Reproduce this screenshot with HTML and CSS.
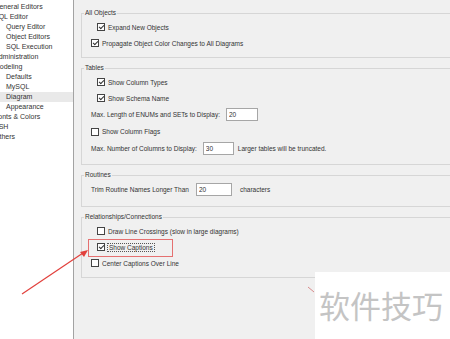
FILE: index.html
```html
<!DOCTYPE html>
<html lang="en">
<head>
    <meta charset="UTF-8">
    <meta name="viewport" content="width=device-width, initial-scale=1.0">
    <title>Preferences - Diagram</title>
    <link rel="stylesheet" href="styles.css">
</head>
<body>

<div class="janela">
    <!-- Arvore de categorias -->
    <ul class="arvore">
        <li class="nivel1">General Editors</li>
        <li class="nivel1">SQL Editor</li>
        <li class="nivel2">Query Editor</li>
        <li class="nivel2">Object Editors</li>
        <li class="nivel2">SQL Execution</li>
        <li class="nivel1">Administration</li>
        <li class="nivel1">Modeling</li>
        <li class="nivel2">Defaults</li>
        <li class="nivel2">MySQL</li>
        <li class="nivel2 selecionado">Diagram</li>
        <li class="nivel2">Appearance</li>
        <li class="nivel1">Fonts &amp; Colors</li>
        <li class="nivel1">SSH</li>
        <li class="nivel1">Others</li>
    </ul>

    <div class="pagina">
        <fieldset class="grupo">
            <legend>All Objects</legend>
            <div class="linha recuo"><span class="caixa marcada"></span>Expand New Objects</div>
            <div class="linha"><span class="caixa marcada"></span>Propagate Object Color Changes to All Diagrams</div>
        </fieldset>

        <fieldset class="grupo tabelas">
            <legend>Tables</legend>
            <div class="linha recuo"><span class="caixa marcada"></span>Show Column Types</div>
            <div class="linha recuo"><span class="caixa marcada"></span>Show Schema Name</div>
            <div class="linha alta">Max. Length of ENUMs and SETs to Display: <input class="campo largo" type="text" value="20"></div>
            <div class="linha alta"><span class="caixa"></span>Show Column Flags</div>
            <div class="linha alta">Max. Number of Columns to Display: <input class="campo" type="text" value="30"><span class="nota">Larger tables will be truncated.</span></div>
        </fieldset>

        <fieldset class="grupo rotinas">
            <legend>Routines</legend>
            <div class="linha alta">Trim Routine Names Longer Than <input class="campo medio" type="text" value="20"><span class="nota longe">characters</span></div>
        </fieldset>

        <fieldset class="grupo">
            <legend>Relationships/Connections</legend>
            <div class="linha recuo"><span class="caixa"></span>Draw Line Crossings (slow in large diagrams)</div>
            <div class="linha recuo"><span class="caixa marcada"></span><span class="foco">Show Captions</span></div>
            <div class="linha"><span class="caixa"></span>Center Captions Over Line</div>
        </fieldset>
    </div>
</div>

<!-- Marcacao vermelha por cima da tela -->
<div class="destaque"></div>
<svg class="seta" width="450" height="339" viewBox="0 0 450 339">
    <line x1="22" y1="294" x2="83" y2="253" stroke="#e2403c" stroke-width="1.2"/>
    <polygon points="88,250 80,252 84,257" fill="#e2403c"/>
    <line x1="308" y1="287" x2="314" y2="292" stroke="#d88a8a" stroke-width="1"/>
</svg>

<div class="marca-dagua">软件技巧</div>

</body>
</html>
```

FILE: styles.css
```css
/* Janela de preferencias */
body {
    margin: 0;
    width: 450px;
    height: 339px;
    overflow: hidden;
    position: relative;
    font-family: "Liberation Sans", Arial, sans-serif;
    color: #333;
}
.janela {
    display: flex;
    height: 339px;
}
/* Arvore da esquerda */
.arvore {
    list-style: none;
    margin: 0;
    padding: 2px 0 0 0;
    width: 73px;
    flex-shrink: 0;
    background-color: white;
    border-right: 1px solid #a3a3a3;
    overflow: hidden;
    font-size: 7px;
}
.arvore li {
    height: 10px;
    line-height: 10px;
    white-space: nowrap;
}
.nivel1 {
    margin-left: -6px;
}
.nivel2 {
    padding-left: 6px;
}
.selecionado {
    background-color: #e9e9e9;
}
/* Area dos grupos */
.pagina {
    flex: 1;
    background-color: #f0f0f0;
    padding: 8px 0 0 7px;
    overflow: hidden;
    font-size: 6.5px;
}
.grupo {
    margin: 0 -20px 5px 0;
    border: 1px solid #d6d6d6;
    padding: 1px 0 6px 9px;
    min-width: 0;
}
.grupo legend {
    margin-left: -7px;
    padding: 0 1px;
    line-height: 10px;
}
.tabelas {
    padding-bottom: 7px;
}
.rotinas {
    padding-bottom: 8px;
}
.linha {
    display: flex;
    align-items: center;
    height: 16px;
    white-space: nowrap;
}
.linha.alta {
    height: 17px;
}
.recuo {
    padding-left: 6px;
}
/* Caixa de selecao desenhada */
.caixa {
    position: relative;
    width: 8px;
    height: 8px;
    box-sizing: border-box;
    border: 1px solid #444;
    background-color: white;
    margin-right: 3px;
    flex-shrink: 0;
}
.caixa.marcada::after {
    content: '';
    position: absolute;
    left: 2px;
    top: 0;
    width: 2px;
    height: 4px;
    border-right: 1px solid #333;
    border-bottom: 1px solid #333;
    transform: rotate(45deg);
}
.campo {
    font-family: inherit;
    font-size: 6.5px;
    color: #333;
    width: 31px;
    height: 13px;
    box-sizing: border-box;
    margin: 0 0 0 6px;
    padding: 0 2px;
    border: 1px solid #a6a6a6;
    background-color: white;
    outline: none;
}
.campo.largo {
    width: 32px;
}
.campo.medio {
    width: 36px;
    margin-left: 7px;
}
.nota {
    margin-left: 4px;
}
.nota.longe {
    margin-left: 8px;
}
.foco {
    outline: 1px dotted #555;
    padding: 0 1px;
}
/* Anotacoes em vermelho */
.destaque {
    position: absolute;
    left: 88px;
    top: 239px;
    width: 83px;
    height: 16px;
    border: 1px solid #e57070;
}
.seta {
    position: absolute;
    left: 0;
    top: 0;
    pointer-events: none;
}
.marca-dagua {
    position: absolute;
    left: 315px;
    top: 272px;
    width: 135px;
    height: 67px;
    background-color: white;
    color: #c4c4c4;
    font-family: "Noto Sans CJK SC", sans-serif;
    font-size: 31px;
    line-height: 31px;
    padding: 17px 0 0 4px;
    box-sizing: border-box;
    white-space: nowrap;
}
```
